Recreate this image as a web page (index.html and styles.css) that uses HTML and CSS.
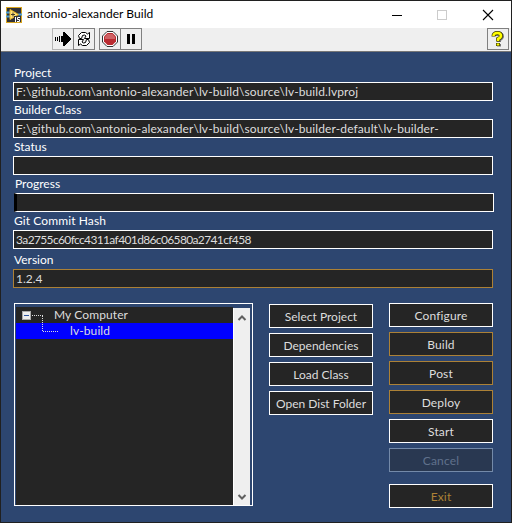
FILE: index.html
```html
<!DOCTYPE html>
<html lang="en">
<head>
<meta charset="utf-8">
<title>antonio-alexander Build</title>
<link rel="stylesheet" href="styles.css">
</head>
<body>
<div class="window">
  <header class="titlebar">
    <svg class="app-icon" width="16" height="16" viewBox="0 0 16 16">
      <rect x=".5" y=".5" width="15" height="15" fill="#303238" stroke="#d9a620"/>
      <path d="M0 5.5H4M0 9.5H4M12 7.5H16" stroke="#4c9fd5" stroke-width="2"/>
      <path d="M4 2.500L12.500 7.500L4 12.500Z" fill="#ffe27a" stroke="#e9b526"/>
      <path d="M5 7.5H9M7 5.5V9.5" stroke="#423b2a"/>
      <rect x="8" y="9" width="7" height="6" fill="#303238"/>
      <path d="M9.5 10V15M14 10.5H11.5V12.5H13.5V14.5H11" fill="none" stroke="#fff"/>
    </svg>
    <h1 class="title">antonio-alexander Build</h1>
    <div class="controls">
      <svg width="10" height="10"><path d="M0 5.5H10" stroke="#000"/></svg>
      <svg width="10" height="10"><rect x=".5" y=".5" width="9" height="9" fill="none" stroke="#ccc"/></svg>
      <svg class="close" width="10" height="10"><path d="M0 0L10 10M10 0L0 10" stroke="#000" stroke-width="1.1"/></svg>
    </div>
  </header>
  <div class="toolbar">
    <div class="tool tool-run">
      <svg width="16" height="14" viewBox="0 0 16 14" shape-rendering="crispEdges"><path d="M.5 5V9M2.500 5V9M4.500 4V10" stroke="#000"/><path d="M6 4H8V0H9L16 7L9 14H8V10H6Z"/></svg>
    </div>
    <div class="tool tool-loop">
      <svg width="16" height="16" viewBox="0 0 16 16" fill="#fff" stroke="#000"><path d="M3.500 7.500L2.500 4.500L5.500 1.500H9.500L11.500 3L13.500 1.500V7.500H8.500L10 5L8.500 4L6.500 4.500L5.500 7.500Z"/><path d="M12.500 8.500L13.500 11.500L10.500 14.500H6.500L4.500 13L2.500 14.500V8.500H7.500L6 11L7.500 12L9.500 11.500L10.500 8.500Z"/></svg>
    </div>
    <div class="tool tool-stop">
      <svg width="16" height="16" viewBox="0 0 16 16"><path d="M5 .5H11L15.5 5V11L11 15.5H5L.5 11V5Z" fill="#fff" stroke="#333"/><path d="M5.5 2H10.5L14 5.5V10.5L10.5 14H5.5L2 10.5V5.5Z" fill="#b92b30"/><path d="M5.5 3H10.5L13 6V8H3V6Z" fill="#cf6265"/></svg>
    </div>
    <div class="tool tool-pause">
      <svg width="10" height="10"><path d="M1 0H4V10H1ZM6 0H9V10H6Z"/></svg>
    </div>
    <div class="tool tool-help">
      <svg width="14" height="16" viewBox="0 0 14 16" fill="none"><path d="M4 5Q4 3 7.500 3Q11 3 11 5.500Q11 7 8 8.500V11M8 13V15.500" stroke="#777" stroke-width="4"/><path d="M2.500 5.500Q2.500 2 6.500 2Q10 2 10 5Q10 6.500 7 8V10.500M7 12V15" stroke="#3d3b00" stroke-width="4"/><path d="M2.500 5Q2.500 2 6.500 2Q10 2 10 5Q10 6.500 7 8V10M7 12.500V14.500" stroke="#ff0" stroke-width="2.600"/></svg>
    </div>
  </div>
  <main class="panel">
    <section class="fields">
      <div class="field"><span class="label">Project</span><div class="value path">F:\github.com\antonio-alexander\lv-build\source\lv-build.lvproj</div></div>
      <div class="field"><span class="label">Builder Class</span><div class="value path">F:\github.com\antonio-alexander\lv-build\source\lv-builder-default\lv-builder-</div></div>
      <div class="field"><span class="label">Status</span><div class="value"></div></div>
      <div class="field field-progress"><span class="label">Progress</span><div class="value progress"></div></div>
      <div class="field"><span class="label label-hash">Git Commit Hash</span><div class="value hash">3a2755c60fcc4311af401d86c06580a2741cf458</div></div>
      <div class="field field-version"><span class="label">Version</span><div class="value amber">1.2.4</div></div>
    </section>
    <section class="lower">
      <div class="tree">
        <div class="items">
          <div class="item">
            <svg class="branch" width="38" height="32"><rect x="6.500" y="4.500" width="8" height="8" fill="#eee" stroke="#aaa"/><path d="M8 8.500H13" stroke="#2d55a0"/><path d="M16 8.500H27M26.500 9V24M27 24.500H42" fill="none" stroke="#ddd" stroke-dasharray="1 1"/></svg>
            <span>My Computer</span>
          </div>
          <div class="item selected"><span>lv-build</span></div>
        </div>
        <div class="scrollbar">
          <svg width="8" height="6"><path d="M.5 5L4 1.500L7.500 5" fill="none" stroke="#606060" stroke-width="2"/></svg>
          <svg width="8" height="6"><path d="M.5 1L4 4.500L7.500 1" fill="none" stroke="#606060" stroke-width="2"/></svg>
        </div>
      </div>
      <div class="buttons buttons-left">
        <button>Select Project</button><button>Dependencies</button><button>Load Class</button><button>Open Dist Folder</button>
      </div>
      <div class="buttons">
        <button>Configure</button><button class="amber">Build</button><button class="amber">Post</button><button class="amber">Deploy</button><button>Start</button><button class="disabled">Cancel</button><button class="exit">Exit</button>
      </div>
    </section>
  </main>
</div>
</body>
</html>
```
FILE: styles.css
```css
* { box-sizing: border-box; }
body {
  margin: 0;
  width: 512px;
  height: 523px;
  padding: 1px 1px 1px 1px;
  background: #202020;
  font: 12px/16px Lato, "Noto Sans", sans-serif;
  overflow: hidden;
}
svg { display: block; flex: none; overflow: visible; }
.window { height: 521px; background: #2d4670; }
.titlebar {
  height: 27px;
  display: flex;
  align-items: center;
  padding: 0 18px 0 5px;
  background: #fff;
}
.title { margin: -2px 0 0 5px; font-size: 12px; font-weight: 400; letter-spacing: .05px; white-space: nowrap; }
.controls { display: flex; gap: 35px; margin-left: auto; }
.close { margin-left: 1px; }
.toolbar {
  height: 24px;
  display: flex;
  background: #efefef;
  border-bottom: 1px solid #777;
  padding: 0 2px 0 51px;
}
.tool {
  width: 22px;
  height: 22px;
  display: flex;
  align-items: center;
  justify-content: center;
  border: 1px solid #808080;
}
.tool-run { border-color: #b5b5b5; }
.tool-loop { margin-left: -1px; }
.tool-stop { margin-left: 4px; }
.tool-pause { margin-left: -1px; }
.tool-help { margin-left: auto; }
.panel { padding: 14px 18px 0 12px; }
.field { height: 37px; }
.field-progress { margin: 0 -1px 0 1px; }
.field-version { height: 39px; padding-top: 2px; }
.label { display: block; height: 16px; padding-left: 1px; line-height: 14px; color: #fff; white-space: nowrap; }
.label-hash { letter-spacing: .1px; }
.value {
  height: 19px;
  border: 1px solid #fff;
  padding-left: 2px;
  background: #252525;
  color: #ddd;
  line-height: 17px;
  white-space: pre;
}
.value.amber { border-color: #ac8136; }
.progress { border-left: 3px solid #000; }
.path { letter-spacing: .1px; }
.hash { letter-spacing: -.64px; }
.lower { display: flex; padding: 13px 0 0 1px; }
.tree { width: 239px; height: 203px; display: flex; border: 1px solid #fff; padding: 3px 2px 0 1px; }
.items { width: 217px; background: #252525; color: #ddd; letter-spacing: .1px; }
.item { position: relative; height: 16px; padding-left: 38px; line-height: 16px; }
.selected { padding-left: 54px; background: #00f; }
.branch { position: absolute; left: 0; top: 0; z-index: 1; }
.scrollbar {
  width: 17px;
  margin-top: 1px;
  padding: 7px 0 5px;
  display: flex;
  flex-direction: column;
  justify-content: space-between;
  align-items: center;
  background: #efefef;
  border-left: 1px solid #fff;
}
.buttons { width: 104px; margin-left: 16px; display: flex; flex-direction: column; gap: 5px; }
.buttons-left { padding-top: 1px; }
.buttons-left button { letter-spacing: 0; }
button {
  height: 24px;
  padding: 1px 0 0;
  border: 1px solid #fff;
  background: #252525;
  color: #ddd;
  font: inherit;
  letter-spacing: .15px;
  white-space: nowrap;
}
button.amber { border-color: #ac8136; }
button.disabled { background: #293851; border-color: #748aa9; color: #60718c; }
button.exit { margin-top: 7px; color: #ac8136; }
```
